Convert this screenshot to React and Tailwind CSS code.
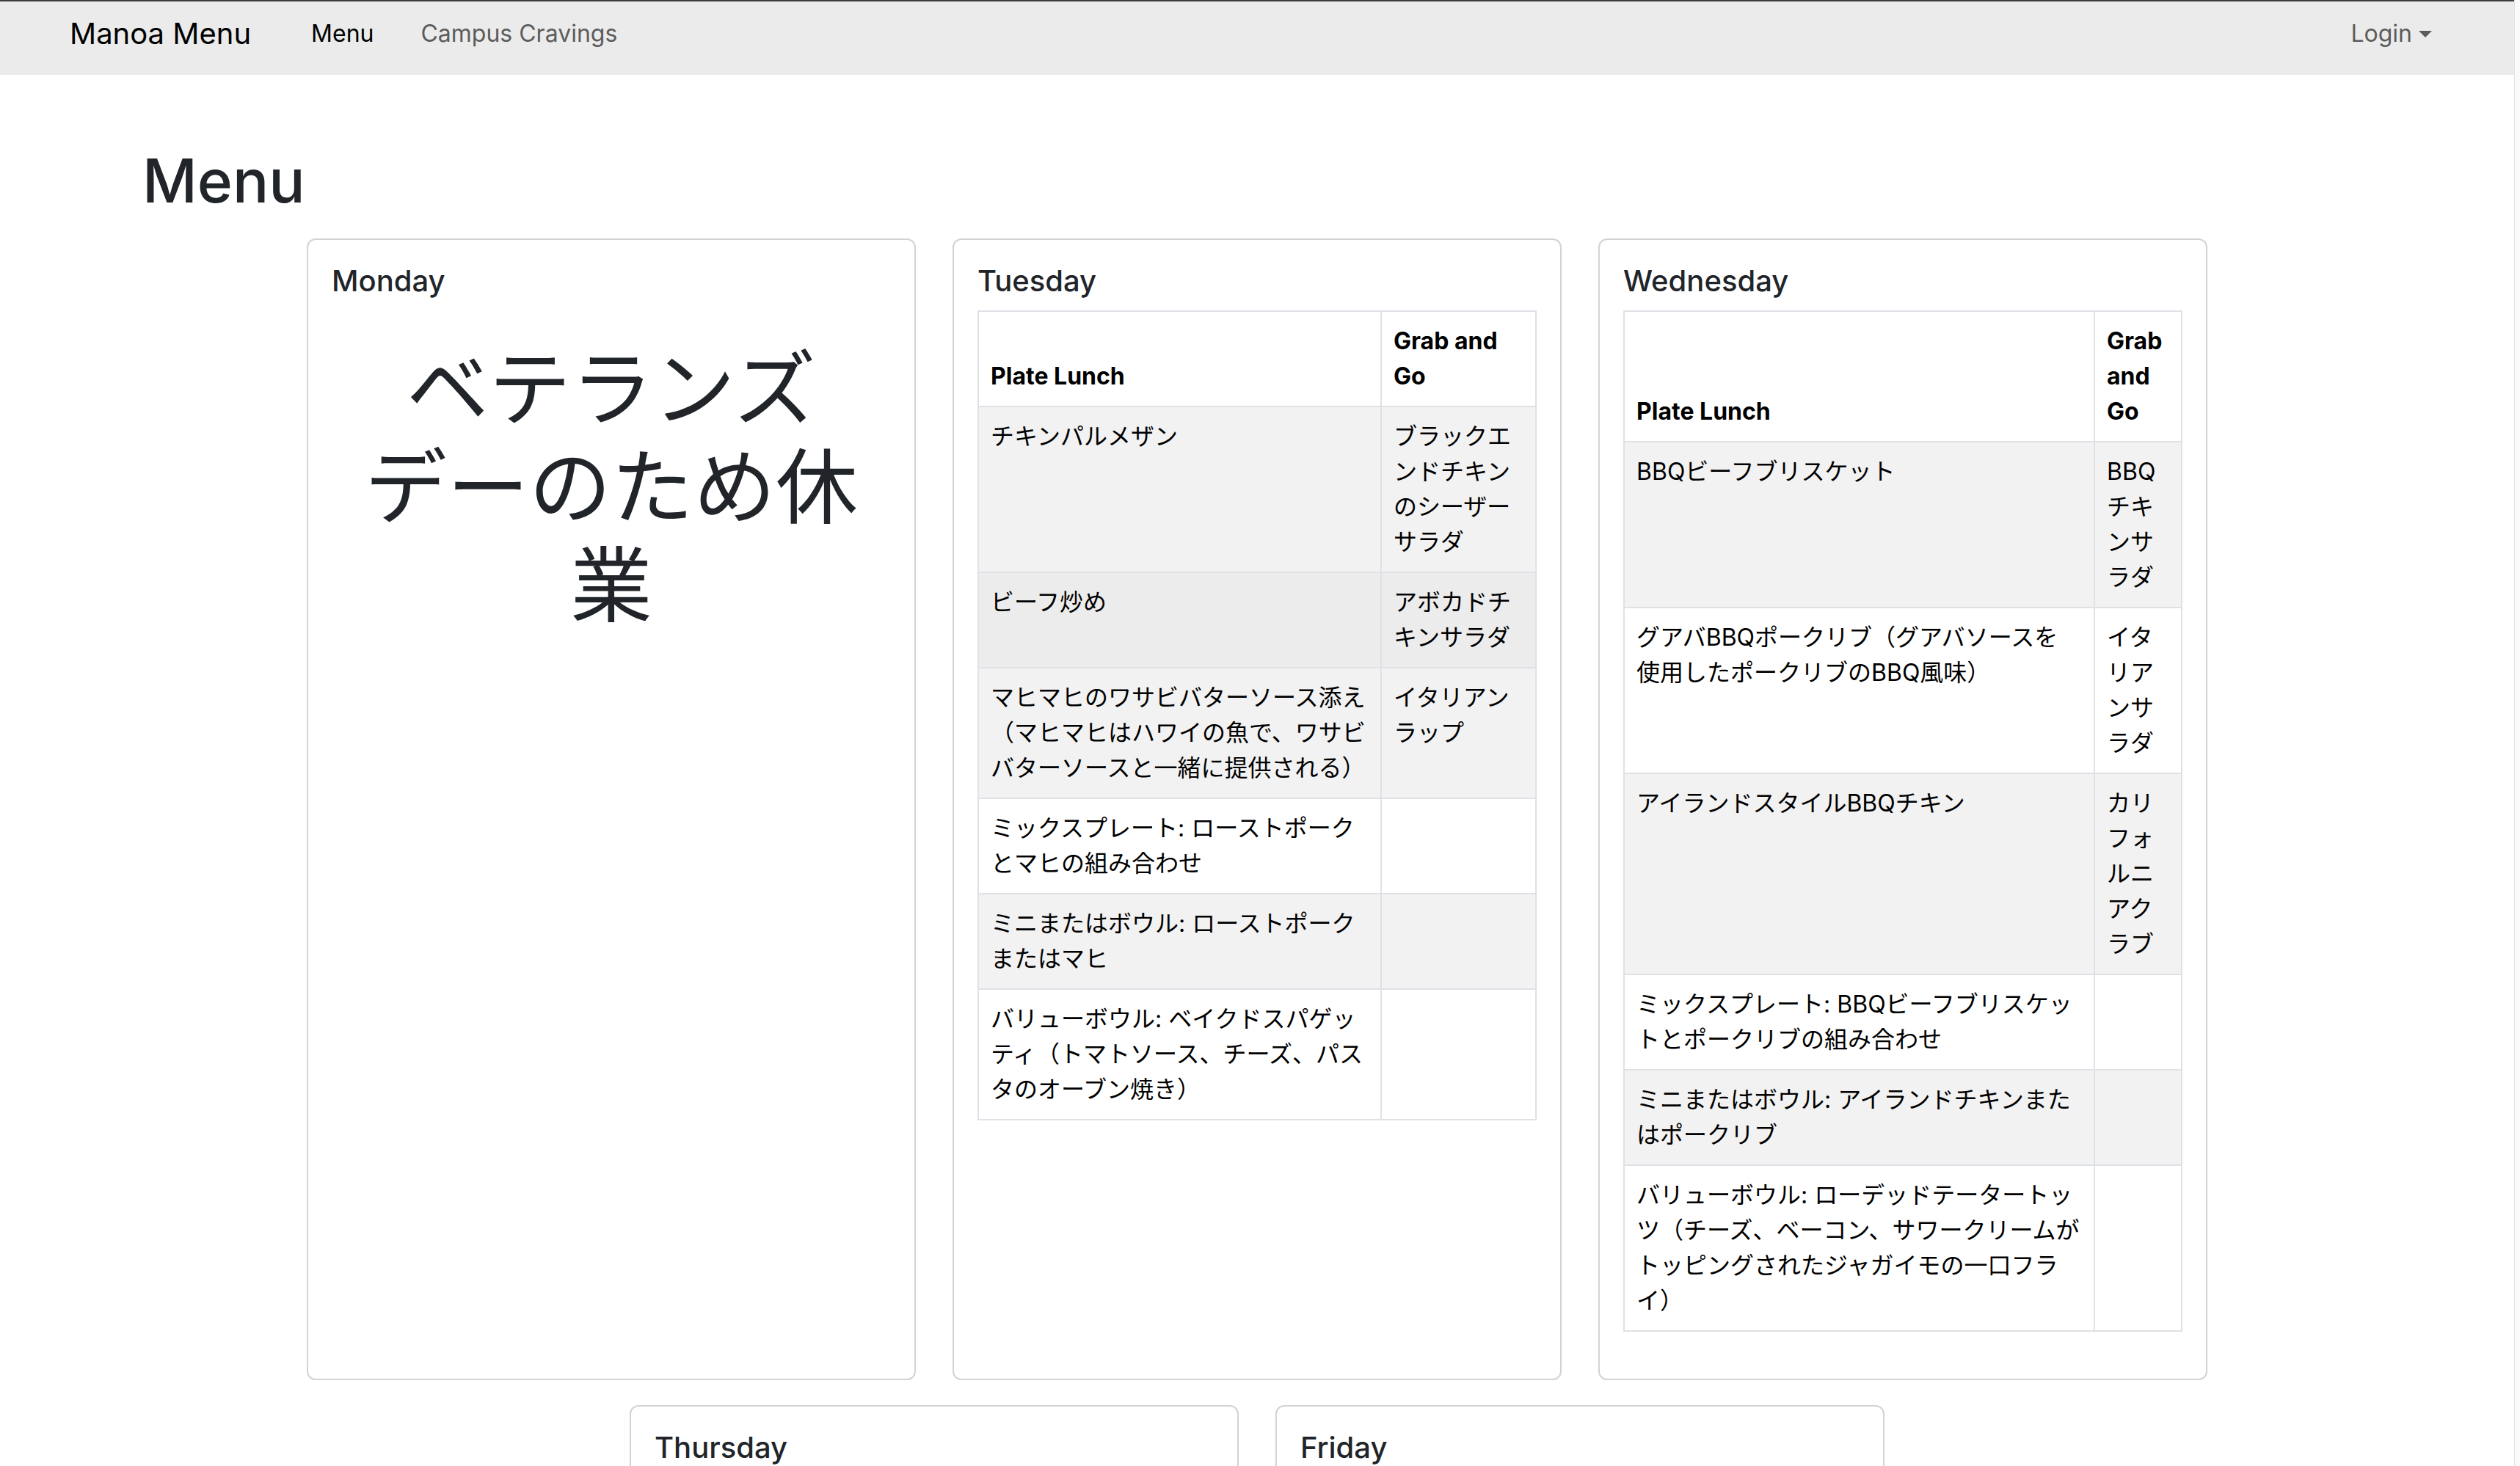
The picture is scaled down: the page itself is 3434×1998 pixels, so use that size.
import React from "react";

const weekMenu = [
  {
    day: "Tuesday",
    plateCol: "w-[549px]",
    grabHeader: "Grab and\nGo",
    rows: [
      { plate: "チキンパルメザン", grab: "ブラックエ\nンドチキン\nのシーザー\nサラダ" },
      { plate: "ビーフ炒め", grab: "アボカドチ\nキンサラダ", hover: true },
      {
        plate: "マヒマヒのワサビバターソース添え\n（マヒマヒはハワイの魚で、ワサビ\nバターソースと一緒に提供される）",
        grab: "イタリアン\nラップ",
      },
      { plate: "ミックスプレート: ローストポーク\nとマヒの組み合わせ", grab: "" },
      { plate: "ミニまたはボウル: ローストポーク\nまたはマヒ", grab: "" },
      { plate: "バリューボウル: ベイクドスパゲッ\nティ（トマトソース、チーズ、パス\nタのオーブン焼き）", grab: "" },
    ],
  },
  {
    day: "Wednesday",
    plateCol: "w-[641px]",
    grabHeader: "Grab\nand\nGo",
    rows: [
      { plate: "BBQビーフブリスケット", grab: "BBQ\nチキ\nンサ\nラダ" },
      { plate: "グアバBBQポークリブ（グアバソースを\n使用したポークリブのBBQ風味）", grab: "イタ\nリア\nンサ\nラダ" },
      { plate: "アイランドスタイルBBQチキン", grab: "カリ\nフォ\nルニ\nアク\nラブ" },
      { plate: "ミックスプレート: BBQビーフブリスケッ\nトとポークリブの組み合わせ", grab: "" },
      { plate: "ミニまたはボウル: アイランドチキンまた\nはポークリブ", grab: "" },
      {
        plate: "バリューボウル: ローデッドテータートッ\nツ（チーズ、ベーコン、サワークリームが\nトッピングされたジャガイモの一口フラ\nイ）",
        grab: "",
      },
    ],
  },
];

const DayCard = ({ day, children, className = "" }) => (
  <div className={`w-[830px] rounded-[12px] border-2 border-[#d3d3d3] bg-white p-[32px] ${className}`}>
    <h5 className="mb-[16px] text-[40px] font-medium leading-[48px] text-[#212529]">{day}</h5>
    {children}
  </div>
);

const MenuTable = ({ plateCol, grabHeader, rows }) => (
  <table className="mb-[32px] w-full table-fixed border-collapse border-2 border-[#dee2e6] text-[32px] leading-[48px] text-black">
    <colgroup>
      <col className={plateCol} />
      <col />
    </colgroup>
    <thead>
      <tr className="bg-white">
        <th className="border-2 border-[#dee2e6] p-[16px] text-left align-bottom font-bold">Plate Lunch</th>
        <th className="border-2 border-[#dee2e6] p-[16px] text-left align-bottom font-bold whitespace-pre">
          {grabHeader}
        </th>
      </tr>
    </thead>
    <tbody>
      {rows.map((row, i) => (
        <tr
          key={i}
          className={row.hover ? "bg-[#ececec]" : i % 2 === 0 ? "bg-[#f2f2f2]" : "bg-white"}
        >
          <td className="border-2 border-[#dee2e6] p-[16px] align-top whitespace-pre">{row.plate}</td>
          <td className="border-2 border-[#dee2e6] p-[16px] align-top whitespace-pre">{row.grab}</td>
        </tr>
      ))}
    </tbody>
  </table>
);

const App = () => {
  return (
    <div className="flex h-screen overflow-hidden bg-white font-['Inter','Noto_Sans_CJK_JP',sans-serif] text-[#212529]">
      <div className="min-w-0 flex-1">
        <nav className="flex h-[102px] items-center border-t-2 border-[#3d3d3d] bg-[#ebebeb] pb-[12px] pl-[95px] pr-[112px]">
          <a className="mr-[82px] text-[40px] leading-none text-black">Manoa Menu</a>
          <div className="flex items-center gap-[64px] text-[32px] leading-none">
            <a className="text-black">Menu</a>
            <a className="text-[#5c5c5c]">Campus Cravings</a>
          </div>
          <a className="ml-auto flex items-center text-[32px] leading-none text-[#5c5c5c]">
            Login
            <span className="ml-[9px] h-0 w-0 border-x-[9px] border-t-[9px] border-x-transparent border-t-[#5c5c5c]" />
          </a>
        </nav>

        <main className="pt-[96px]">
          <h1 className="pl-[194px] text-[82px] font-medium leading-[98px]">Menu</h1>

          <div className="mx-auto mt-[29px] flex w-[2590px] flex-wrap justify-center gap-x-[50px] gap-y-[34px]">
            <DayCard day="Monday">
              <p className="mt-[56px] whitespace-pre-line text-center text-[112px] font-normal leading-[134px]">
                {"ベテランズ\nデーのため休\n業"}
              </p>
            </DayCard>

            {weekMenu.map((d) => (
              <DayCard key={d.day} day={d.day}>
                <MenuTable plateCol={d.plateCol} grabHeader={d.grabHeader} rows={d.rows} />
              </DayCard>
            ))}

            <DayCard day="Thursday" className="min-h-[600px]" />
            <DayCard day="Friday" className="min-h-[600px]" />
          </div>
        </main>
      </div>
      <div className="w-[8px] border-l border-[#e3e3e3] bg-[#fafafa]" />
    </div>
  );
};

export default App;
